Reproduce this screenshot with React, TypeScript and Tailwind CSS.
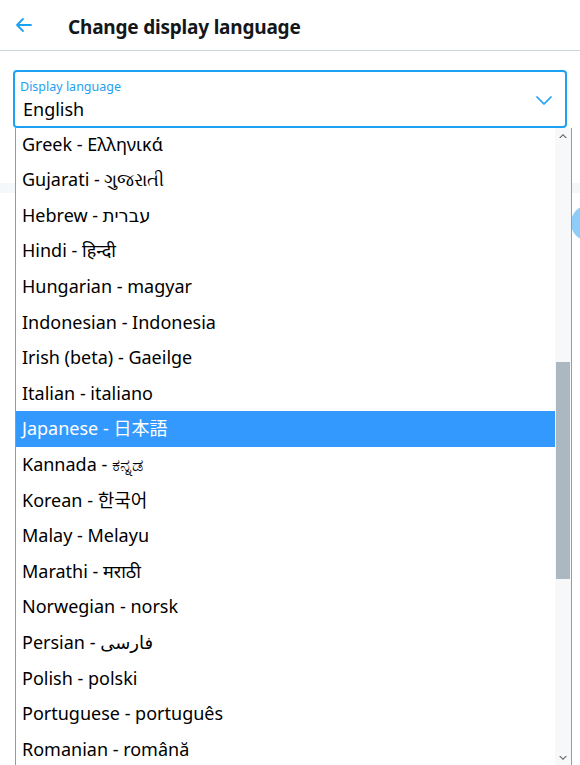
import React from "react";

const langs = [
  "Greek - Ελληνικά",
  "Gujarati - ગુજરાતી",
  "Hebrew - עברית",
  "Hindi - हिन्दी",
  "Hungarian - magyar",
  "Indonesian - Indonesia",
  "Irish (beta) - Gaeilge",
  "Italian - italiano",
  "Japanese - 日本語",
  "Kannada - ಕನ್ನಡ",
  "Korean - 한국어",
  "Malay - Melayu",
  "Marathi - मराठी",
  "Norwegian - norsk",
  "Persian - فارسی",
  "Polish - polski",
  "Portuguese - português",
  "Romanian - română",
];

export default function App() {
  return (
    <div
      className="relative w-[580px] h-[765px] overflow-hidden bg-white"
      style={{ fontFamily: '"Noto Sans", "DejaVu Sans", "Noto Sans CJK JP", sans-serif' }}
    >
      <div className="flex h-[51px] items-center border-b border-[#ccd6dd]">
        <div className="flex w-[68px] items-center pl-[15px]">
          <svg width="18" height="16" viewBox="0 0 18 16" fill="none" stroke="#1da1f2" strokeWidth="1.8" strokeLinecap="round" strokeLinejoin="round">
            <path d="M16 8H2M8 2L2 8l6 6" />
          </svg>
        </div>
        <div className="pt-[4px] text-[19px] font-bold tracking-[-0.2px] text-[#14171a]">Change display language</div>
      </div>
      <div className="px-[13px] pt-[19px]">
        <div className="relative h-[58px] rounded-[4px] border-2 border-[#1da1f2] px-[5px] pt-[7px]">
          <div className="text-[12.5px] leading-[15px] text-[#1da1f2]">Display language</div>
          <div className="mt-[3px] pl-[3px] text-[18px] leading-[24px] text-black">English</div>
          <svg className="absolute right-[12px] top-[22px]" width="18" height="12" viewBox="0 0 18 12" fill="none" stroke="#1da1f2" strokeWidth="1.7" strokeLinecap="round" strokeLinejoin="round">
            <path d="M2 3l7 7 7-7" />
          </svg>
        </div>
      </div>
      <div className="mt-[55px] h-[10px] bg-[#f5f8fa]" />
      <div className="absolute left-[571px] top-[205px] h-[36px] w-[60px] rounded-full bg-[#8ecdf8]" />

      <div className="absolute left-[15px] top-[128px] flex h-[637px] w-[557px] border-x border-[#9a9a9a] bg-white">
        <div className="flex-1 overflow-hidden">
          <div className="mt-[-1.6px]">
            {langs.map((l) => (
              <div
                key={l}
                className={
                  "flex h-[35.6px] items-center pl-[6px] text-[18px] " +
                  (l.startsWith("Japanese") ? "bg-[#3399ff] text-white" : "text-black")
                }
              >
                {l}
              </div>
            ))}
          </div>
        </div>
        <div className="relative w-[16px] bg-[#f7f8fa]">
          <svg className="absolute left-[4px] top-[5px]" width="8" height="6" viewBox="0 0 8 6" fill="#606060">
            <path d="M0 5L4 1l4 4H6.5L4 2.5 1.5 5z" />
          </svg>
          <div className="absolute left-[1px] right-[1px] top-[234px] h-[217px] bg-[#abb8c2]" />
          <svg className="absolute left-[4px] bottom-[4px]" width="8" height="6" viewBox="0 0 8 6" fill="#606060">
            <path d="M0 1l4 4 4-4H6.5L4 3.5 1.5 1z" />
          </svg>
        </div>
      </div>
    </div>
  );
}
